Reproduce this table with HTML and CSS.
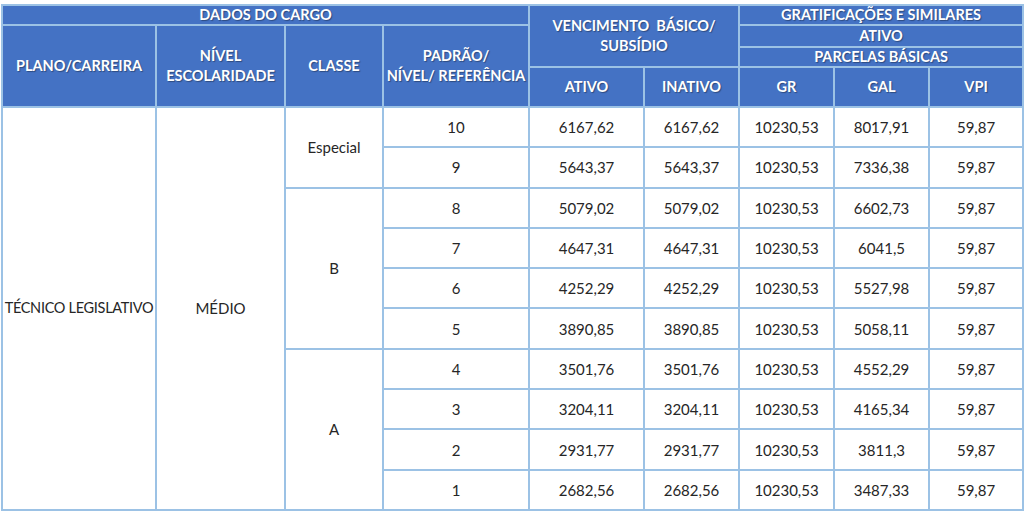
FILE: index.html
```html
<!DOCTYPE html>
<html lang="pt">
<head>
<meta charset="utf-8">
<link rel="stylesheet" href="styles.css">
</head>
<body>
<div class="wrap">
<table class="tbl">
  <colgroup>
    <col class="c1"><col class="c2"><col class="c3"><col class="c4"><col class="c5"><col class="c6"><col class="c7"><col class="c8"><col class="c9">
  </colgroup>
  <thead>
    <tr class="h1">
      <th colspan="4">DADOS DO CARGO</th>
      <th colspan="2" rowspan="3" class="two">VENCIMENTO &nbsp;BÁSICO/<br>SUBSÍDIO</th>
      <th colspan="3">GRATIFICAÇÕES E SIMILARES</th>
    </tr>
    <tr class="h2">
      <th rowspan="3" class="two">PLANO/CARREIRA</th>
      <th rowspan="3" class="two">NÍVEL<br>ESCOLARIDADE</th>
      <th rowspan="3" class="two">CLASSE</th>
      <th rowspan="3" class="two">PADRÃO/<br>NÍVEL/ REFERÊNCIA</th>
      <th colspan="3">ATIVO</th>
    </tr>
    <tr class="h3">
      <th colspan="3">PARCELAS BÁSICAS</th>
    </tr>
    <tr class="h4">
      <th>ATIVO</th><th>INATIVO</th><th>GR</th><th>GAL</th><th>VPI</th>
    </tr>
  </thead>
  <tbody>
    <tr><td rowspan="10" class="plan">TÉCNICO LEGISLATIVO</td><td rowspan="10">MÉDIO</td><td rowspan="2">Especial</td><td>10</td><td>6167,62</td><td>6167,62</td><td>10230,53</td><td>8017,91</td><td>59,87</td></tr>
    <tr><td>9</td><td>5643,37</td><td>5643,37</td><td>10230,53</td><td>7336,38</td><td>59,87</td></tr>
    <tr><td rowspan="4">B</td><td>8</td><td>5079,02</td><td>5079,02</td><td>10230,53</td><td>6602,73</td><td>59,87</td></tr>
    <tr><td>7</td><td>4647,31</td><td>4647,31</td><td>10230,53</td><td>6041,5</td><td>59,87</td></tr>
    <tr><td>6</td><td>4252,29</td><td>4252,29</td><td>10230,53</td><td>5527,98</td><td>59,87</td></tr>
    <tr><td>5</td><td>3890,85</td><td>3890,85</td><td>10230,53</td><td>5058,11</td><td>59,87</td></tr>
    <tr><td rowspan="4">A</td><td>4</td><td>3501,76</td><td>3501,76</td><td>10230,53</td><td>4552,29</td><td>59,87</td></tr>
    <tr><td>3</td><td>3204,11</td><td>3204,11</td><td>10230,53</td><td>4165,34</td><td>59,87</td></tr>
    <tr><td>2</td><td>2931,77</td><td>2931,77</td><td>10230,53</td><td>3811,3</td><td>59,87</td></tr>
    <tr><td>1</td><td>2682,56</td><td>2682,56</td><td>10230,53</td><td>3487,33</td><td>59,87</td></tr>
  </tbody>
</table>
</div>
</body>
</html>
```
FILE: styles.css
```css
html, body {
  margin: 0;
  padding: 0;
  background: #ffffff;
}
.wrap {
  padding: 4px 0 0 1px;
}
.tbl {
  border-collapse: collapse;
  table-layout: fixed;
  width: 1021px;
  font-family: Lato, "Open Sans", "Liberation Sans", sans-serif;
  color: #262626;
}
.c1 { width: 154px; }
.c2 { width: 129px; }
.c3 { width: 98px; }
.c4 { width: 146px; }
.c5 { width: 115px; }
.c6 { width: 95px; }
.c7 { width: 95px; }
.c8 { width: 95px; }
.c9 { width: 94px; }
.tbl th,
.tbl td {
  border: 2px solid #9cc2e5;
  padding: 0 2px;
  text-align: center;
  vertical-align: middle;
  overflow: hidden;
}
.tbl th {
  background: #4472c4;
  color: #ffffff;
  font-weight: 700;
  font-size: 14.5px;
  line-height: 16px;
  text-shadow: 1px 1px 1px rgba(0, 0, 0, 0.35);
}
.tbl th.two {
  line-height: 20px;
}
.h1 { height: 20px; }
.h2 { height: 22px; }
.h3 { height: 20px; }
.h4 { height: 40px; }
.tbl td {
  font-size: 15px;
  height: 38.3px;
  line-height: 18px;
}
.tbl td.plan {
  white-space: nowrap;
  padding: 0;
  font-size: 14.5px;
  letter-spacing: -0.3px;
}
```
